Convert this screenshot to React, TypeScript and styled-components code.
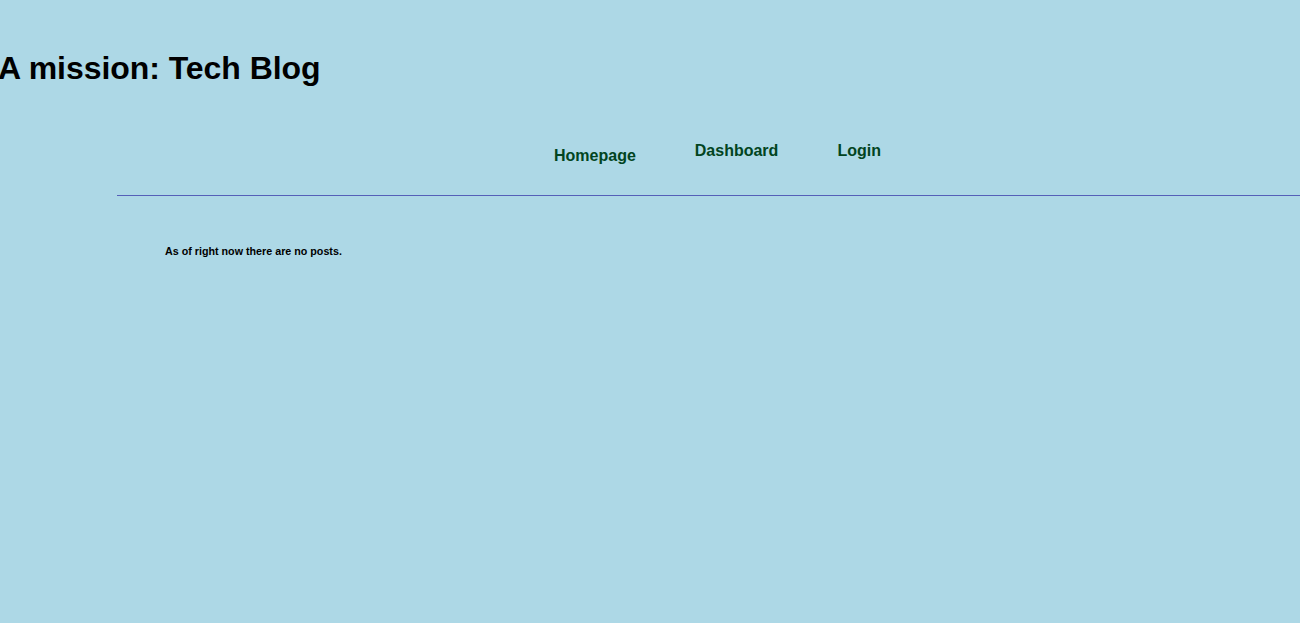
import React from 'react';
import styled, { createGlobalStyle } from 'styled-components';

const GlobalStyle = createGlobalStyle`
  html,
  body {
    margin: 0;
    padding: 0;
    min-height: 100%;
    background: #add8e6;
    font-family: 'Liberation Sans', Arial, sans-serif;
  }
`;

const Page = styled.div`
  min-height: 623px;
  background: #add8e6;
`;

const Header = styled.header`
  padding-top: 50px;
`;

const Title = styled.h1`
  margin: 0 0 0 -2px;
  color: #000;
  font-weight: 700;
  font-size: 32px;
  line-height: normal;
  letter-spacing: -0.05px;
`;

const Nav = styled.nav`
  display: flex;
  align-items: flex-start;
  gap: 59px;
  box-sizing: content-box;
  height: 53px;
  margin: 55px 0 0 117px;
  padding-left: 437px;
  border-bottom: 1px solid #5560b8;
`;

const NavLink = styled.a<{ $drop?: number }>`
  padding-top: ${({ $drop = 0 }) => $drop}px;
  color: #014421;
  font-weight: 700;
  font-size: 16px;
  line-height: normal;
  text-decoration: none;
  cursor: pointer;
`;

const Main = styled.main`
  padding: 49px 0 0 165px;
`;

const EmptyNote = styled.h6`
  margin: 0;
  color: #000;
  font-weight: 700;
  font-size: 10.72px;
  line-height: normal;
`;

export default function App() {
  return (
    <Page>
      <GlobalStyle />
      <Header>
        <Title>A mission: Tech Blog</Title>
        <Nav>
          <NavLink $drop={5}>Homepage</NavLink>
          <NavLink>Dashboard</NavLink>
          <NavLink>Login</NavLink>
        </Nav>
      </Header>
      <Main>
        <EmptyNote>As of right now there are no posts.</EmptyNote>
      </Main>
    </Page>
  );
}
